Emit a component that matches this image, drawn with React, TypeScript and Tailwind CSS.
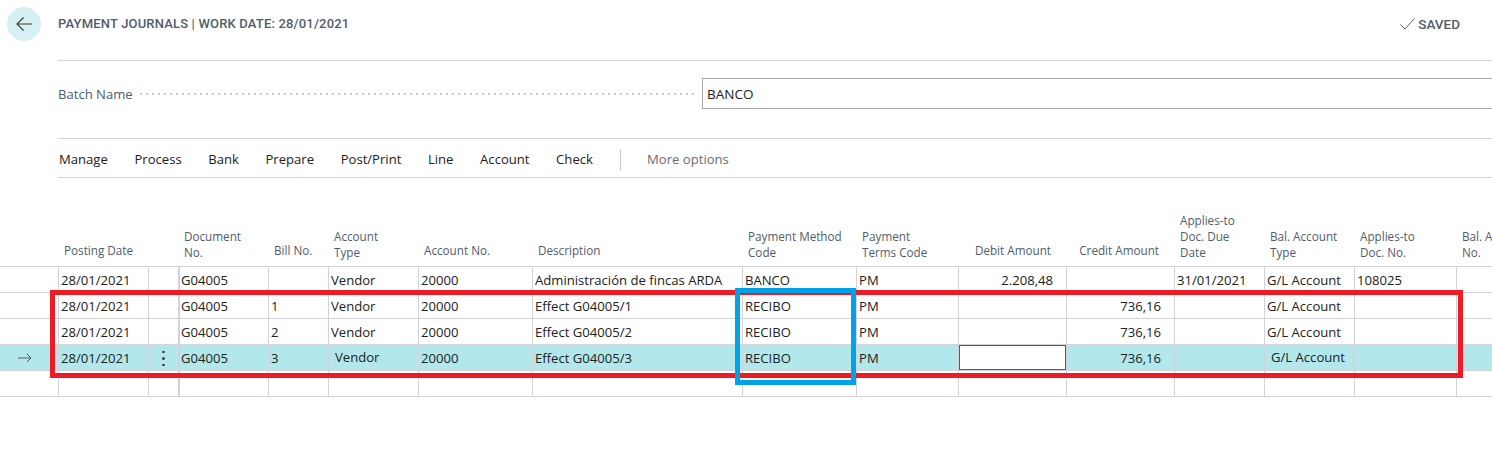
const COLS =
  'grid grid-cols-[58px_90px_30px_90px_60px_90px_114px_210px_114px_102px_108px_108px_90px_90px_102px_100px]';

const MENU = ['Manage', 'Process', 'Bank', 'Prepare', 'Post/Print', 'Line', 'Account', 'Check'];

const HEADERS: { lines: string[]; right?: boolean }[] = [
  { lines: [''] },
  { lines: ['Posting Date'] },
  { lines: [''] },
  { lines: ['Document', 'No.'] },
  { lines: ['Bill No.'] },
  { lines: ['Account', 'Type'] },
  { lines: ['Account No.'] },
  { lines: ['Description'] },
  { lines: ['Payment Method', 'Code'] },
  { lines: ['Payment', 'Terms Code'] },
  { lines: ['Debit Amount'], right: true },
  { lines: ['Credit Amount'], right: true },
  { lines: ['Applies-to', 'Doc. Due', 'Date'] },
  { lines: ['Bal. Account', 'Type'] },
  { lines: ['Applies-to', 'Doc. No.'] },
  { lines: ['Bal. Account', 'No.'] },
];

const ROWS = [
  ['28/01/2021', '', 'G04005', '', 'Vendor', '20000', 'Administración de fincas ARDA', 'BANCO', 'PM', '2.208,48', '', '31/01/2021', 'G/L Account', '108025', ''],
  ['28/01/2021', '', 'G04005', '1', 'Vendor', '20000', 'Effect G04005/1', 'RECIBO', 'PM', '', '736,16', '', 'G/L Account', '', ''],
  ['28/01/2021', '', 'G04005', '2', 'Vendor', '20000', 'Effect G04005/2', 'RECIBO', 'PM', '', '736,16', '', 'G/L Account', '', ''],
  ['28/01/2021', '', 'G04005', '3', 'Vendor', '20000', 'Effect G04005/3', 'RECIBO', 'PM', '', '736,16', '', 'G/L Account', '', ''],
  ['', '', '', '', '', '', '', '', '', '', '', '', '', '', ''],
];

function BackArrow() {
  return (
    <svg width="16" height="14" viewBox="0 0 16 14" fill="none" stroke="#404040" strokeWidth="1.2">
      <path d="M16 7H1M7.6 .5 1 7l6.6 6.5" />
    </svg>
  );
}

function RowArrow() {
  return (
    <svg width="14" height="10" viewBox="0 0 14 10" fill="none" stroke="#505c6d" strokeWidth="1">
      <path d="M0 5h13M8.8 .8 13 5 8.8 9.2" />
    </svg>
  );
}

export default function App() {
  return (
    <div className="relative h-[475px] w-full overflow-hidden bg-white font-['Open_Sans',sans-serif] text-[13.1px] text-[#212121]">
      <div className="pl-[58px]">
        <div className="relative flex h-[61px] items-start justify-between border-b border-[#d4d4d4] pr-[32px] pt-[15px]">
          <button
            type="button"
            className="absolute left-[-51px] top-[7px] flex h-[34px] w-[34px] items-center justify-center rounded-full bg-[#d7f0f3]"
          >
            <BackArrow />
          </button>
          <h1 className="font-['Roboto',sans-serif] text-[13px] font-medium leading-[18px] tracking-[0.17px] text-[#505c6d]">
            PAYMENT JOURNALS | WORK DATE: 28/01/2021
          </h1>
          <div className="flex items-center gap-[3px] font-['Roboto',sans-serif] text-[13.5px] font-medium leading-[18px] text-[#505c6d]">
            <svg width="15" height="12" viewBox="0 0 15 12" fill="none" stroke="#505c6d" strokeWidth="1">
              <path d="M.5 6.5 5 11 14.5 .5" />
            </svg>
            SAVED
          </div>
        </div>

        <div className="flex h-[78px] items-start border-b border-[#d4d4d4] pt-[17px]">
          <span className="w-[80px] pt-[7px] leading-[18px] text-[#505c6d]">Batch Name</span>
          <div className="mt-[15px] h-[2px] w-[556px] bg-[radial-gradient(circle,#c8c8c8_1px,transparent_1px)] bg-[length:6px_2px]" />
          <div className="ml-[8px] mr-[-2px] flex h-[31px] flex-1 items-center border border-[#a8a8a8] pl-[4px] pt-[2px] text-[13.5px]">BANCO</div>
        </div>

        <div className="flex h-[39px] items-center gap-[26.6px] border-b border-[#d4d4d4] pl-[1px] pt-[3px]">
          {MENU.map((item) => (
            <span key={item}>{item}</span>
          ))}
          <div className="h-[22px] w-px bg-[#c8c8c8]" />
          <span className="text-[#6b6b6b]">More options</span>
        </div>
      </div>

      <div className="relative">
        <div className={`${COLS} h-[89px] border-b border-[#d2d2d8] text-[11.7px] leading-[16px] text-[#505c6d]`}>
          {HEADERS.map((header, i) => (
            <div
              key={i}
              className={[
                'flex flex-col justify-end overflow-hidden whitespace-nowrap pl-[6px]',
                header.lines.length > 1 ? 'pb-[6px]' : 'pb-[8px]',
                header.right ? 'items-end pr-[15px]' : 'items-start',
              ].join(' ')}
            >
              {header.lines.map((line, j) => (
                <span key={j}>{line}</span>
              ))}
            </div>
          ))}
        </div>

        {ROWS.map((row, r) => {
          const active = r === 3;
          return (
            <div
              key={r}
              className={`${COLS} h-[26px] border-b border-[#d2d2d8] ${active ? 'bg-[#b2e8ec]' : ''}`}
            >
              <div className="flex items-center pl-[18px]">{active ? <RowArrow /> : null}</div>
              {row.map((cell, c) => {
                const amount = c === 9 || c === 10;
                const shifted = active && (c === 4 || c === 12);
                const focused = active && c === 9;
                const padding = c === 1 ? 'pl-0' : c === 2 ? 'pl-[1px]' : shifted ? 'pl-[6px]' : 'pl-[2px]';
                return (
                  <div
                    key={c}
                    className={[
                      'overflow-hidden whitespace-nowrap border-[#d2d2d8]',
                      shifted ? 'leading-[25px]' : 'leading-[27px]',
                      c === 2 ? 'border-l-2' : 'border-l',
                      focused ? '' : padding,
                      amount && !focused ? 'pr-[13px] text-right' : '',
                    ].join(' ')}
                  >
                    {focused ? (
                      <div className="h-full border border-[#00807f] bg-white" />
                    ) : c === 1 && active ? (
                      <span className="flex h-full flex-col items-center justify-center gap-[4px] pt-[2px]">
                        <span className="h-[2.5px] w-[2.5px] rounded-full bg-[#404040]" />
                        <span className="h-[2.5px] w-[2.5px] rounded-full bg-[#404040]" />
                        <span className="h-[2.5px] w-[2.5px] rounded-full bg-[#404040]" />
                      </span>
                    ) : (
                      cell
                    )}
                  </div>
                );
              })}
            </div>
          );
        })}

        <div className="pointer-events-none absolute left-[50px] top-[112px] h-[88px] w-[1413px] border-[5px] border-[#ed1c24]" />
        <div className="pointer-events-none absolute left-[735px] top-[110px] h-[97px] w-[121px] border-[5px] border-[#00a2e8]" />
      </div>
    </div>
  );
}
